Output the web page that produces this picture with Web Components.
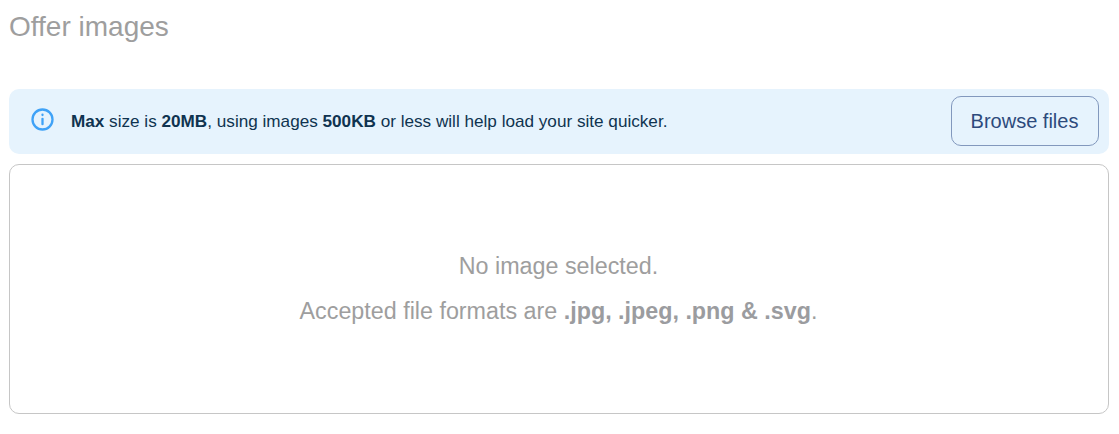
<!DOCTYPE html>
<html><head><meta charset="utf-8"><style>
html,body{margin:0;padding:0;background:#fff}
body{font-family:"Liberation Sans",Arial,sans-serif;width:1119px;height:434px;overflow:hidden}
</style></head><body>
<offer-images></offer-images>
<script>
customElements.define('info-icon',class extends HTMLElement{constructor(){super();this.attachShadow({mode:'open'}).innerHTML=`<style>:host{display:block;width:23px;height:23px;flex:none;margin-bottom:4px}svg{display:block}</style><svg width="23" height="23" viewBox="0 0 23 23" fill="none" stroke="#3fa2f7" stroke-width="2.3" stroke-linecap="round"><circle cx="11.5" cy="11.5" r="10"/><path d="M11.5 10.8v5.4"/><path d="M11.5 6.7v.3"/></svg>`}});
customElements.define('browse-button',class extends HTMLElement{constructor(){super();this.attachShadow({mode:'open'}).innerHTML=`<style>:host{display:flex;align-items:center;justify-content:center;box-sizing:border-box;width:148px;height:50px;margin-bottom:1px;padding-right:1px;border:1px solid #8298bd;border-radius:10px;color:#2d4a7c;font-size:20px;flex:none}</style><slot></slot>`}});
customElements.define('info-banner',class extends HTMLElement{constructor(){super();this.attachShadow({mode:'open'}).innerHTML=`<style>:host{display:flex;align-items:center;box-sizing:border-box;height:65px;padding:0 10px 0 22px;background:#e6f3fd;border-radius:10px;color:#0f3350;font-size:17.15px}.t{flex:1;margin-left:17px}</style><info-icon></info-icon><div class="t"><slot></slot></div><slot name="action"></slot>`}});
customElements.define('drop-zone',class extends HTMLElement{constructor(){super();this.attachShadow({mode:'open'}).innerHTML=`<style>:host{display:flex;flex-direction:column;align-items:center;justify-content:center;gap:19px;box-sizing:border-box;height:250px;margin-top:10px;padding:0 1px 2px 0;border:1px solid #c6c6c6;border-radius:10px;color:#9e9e9e;font-size:23.3px;line-height:26px}</style><slot></slot>`}});
customElements.define('offer-images',class extends HTMLElement{constructor(){super();this.attachShadow({mode:'open'}).innerHTML=`<style>:host{display:block;padding:0 10px 0 9px}h2{margin:0;height:89px;box-sizing:border-box;padding-top:12px;font-size:28px;line-height:30px;font-weight:400;color:#9e9e9e}drop-zone b{color:#9b9c9f}</style>
<h2>Offer images</h2>
<info-banner><b>Max</b> size is <b>20MB</b>, using images <b>500KB</b> or less will help load your site quicker.<browse-button slot="action">Browse files</browse-button></info-banner>
<drop-zone><div>No image selected.</div><div>Accepted file formats are <b>.jpg, .jpeg, .png &amp; .svg</b>.</div></drop-zone>`}});
</script></body></html>
